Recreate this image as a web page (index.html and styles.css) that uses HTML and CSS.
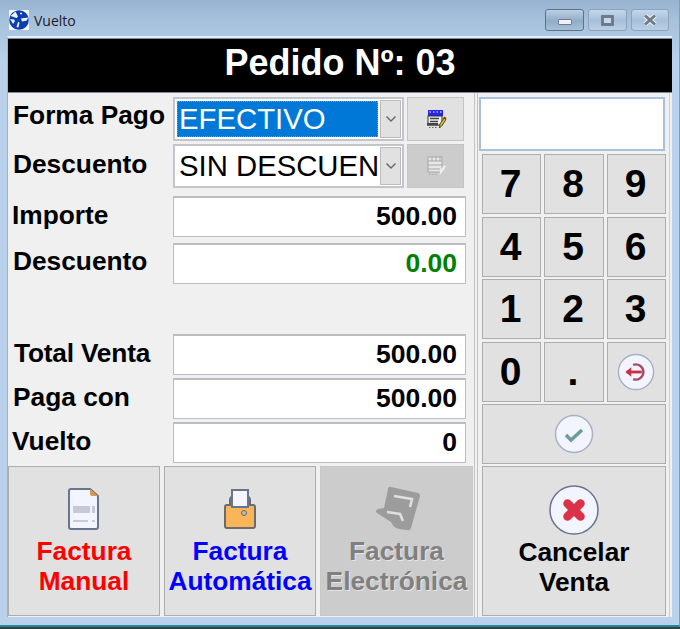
FILE: index.html
```html
<!DOCTYPE html>
<html lang="es">
<head>
<meta charset="utf-8">
<title>Vuelto</title>
<link rel="stylesheet" href="styles.css">
</head>
<body>
<div class="window">
  <header class="titlebar">
    <svg class="app-icon" viewBox="0 0 20 20"><rect width="20" height="20" fill="#f4f7fc"/><circle cx="10" cy="10" r="9.800" fill="#0b3fb0"/><path d="M6.500 1.500l2.500 5-1.500 1.500-6-2zM1 9l4 .5 1 1.500-2 3zM12 8.500l7-1-1 3-5 1zM9 12l1.500.5-1 5-2-.5z" fill="#eef2fb"/><circle cx="12" cy="3.500" r="1" fill="#eef2fb"/></svg>
    <span class="title">Vuelto</span>
    <div class="controls">
      <button class="ctl ctl-active"><span class="glyph-min"></span></button>
      <button class="ctl"><span class="glyph-max"></span></button>
      <button class="ctl"><svg width="14" height="12" viewBox="0 0 14 12"><path d="M2 1.500l10 9M12 1.500l-10 9" stroke="#eef3f8" stroke-width="5"/><path d="M2 1.500l10 9M12 1.500l-10 9" stroke="#6f7a88" stroke-width="3"/></svg></button>
    </div>
  </header>
  <main class="client">
    <h1 class="banner">Pedido Nº: 03</h1>
    <div class="body">
      <section class="left">
        <div class="row row-combo1">
          <label class="lbl">Forma Pago</label>
          <div class="combo"><span class="combo-text selected">EFECTIVO</span><span class="arrow"><svg width="12" height="8" viewBox="0 0 12 8"><path d="M1.500 1.500L6 6l4.500-4.500" fill="none" stroke="#666" stroke-width="1.400"/></svg></span></div>
          <button class="edit">
            <svg width="22" height="22" viewBox="0 0 22 22"><rect x="3" y="2" width="15" height="6" fill="#2626e6"/><path d="M4.500 4h1.500M8 4h1.500M11.500 4h1.500M15 4h1.500" stroke="#fff"/><rect x="3" y="8" width="14" height="9" fill="#eef0f6" stroke="#333" stroke-width="1"/><path d="M5 10.500h9M5 13.500h8" stroke="#444" stroke-width="1.300"/><rect x="2" y="15" width="11" height="2.500" fill="#444"/><path d="M4 19.500h1.500M7 19.500h1.500M10 19.500h1.500" stroke="#666"/><path d="M14.500 20l.5-4 4-6 2 1.500-4 6z" fill="#e6c416" stroke="#222" stroke-width=".8"/><path d="M19 8.500l2.500 1.500-1 1.500-2-1.500z" fill="#8c2020"/></svg>
          </button>
        </div>
        <div class="row row-combo2">
          <label class="lbl">Descuento</label>
          <div class="combo"><span class="combo-text">SIN DESCUEN</span><span class="arrow"><svg width="12" height="8" viewBox="0 0 12 8"><path d="M1.500 1.500L6 6l4.500-4.500" fill="none" stroke="#666" stroke-width="1.400"/></svg></span></div>
          <button class="edit edit-off">
            <svg width="22" height="22" viewBox="0 0 22 22"><rect x="3" y="2" width="14" height="15" fill="#e8e8e8" stroke="#a6a6a6"/><path d="M3 6h14M3 10h14M3 14h12M7 2v4M11 2v4M15 2v4" stroke="#a6a6a6"/><path d="M4 19.500h1.500M7 19.500h1.500M10 19.500h1.500" stroke="#aaa"/><path d="M14.500 20l.5-4 4-6 2 1.500-4 6z" fill="#eee"/></svg>
          </button>
        </div>
        <div class="row row-a">
          <label class="lbl">Importe</label>
          <output class="field">500.00</output>
        </div>
        <div class="row row-b">
          <label class="lbl">Descuento</label>
          <output class="field field-green">0.00</output>
        </div>
        <div class="row row-total">
          <label class="lbl lbl-c">Total Venta</label>
          <output class="field">500.00</output>
        </div>
        <div class="row row-paga">
          <label class="lbl">Paga con</label>
          <output class="field">500.00</output>
        </div>
        <div class="row row-vuelto">
          <label class="lbl">Vuelto</label>
          <output class="field">0</output>
        </div>
        <div class="actions">
          <button class="action red">
            <svg class="act-icon" width="36" height="46" viewBox="0 0 36 46"><path d="M5 3h19l8 7v31a2 2 0 0 1-2 2H5a2 2 0 0 1-2-2V5a2 2 0 0 1 2-2z" fill="#f2f5fd" stroke="#6a7390" stroke-width="2"/><path d="M24 3v5a2 2 0 0 0 2 2h6z" fill="#d89a50"/><path d="M7 20h17v7H7zM26 20h3v7h-3z" fill="#c6cad8"/><path d="M7 35h15M26 35h3" stroke="#c6cad8" stroke-width="2"/></svg>
            <span>Factura<br>Manual</span>
          </button>
          <button class="action blue">
            <svg class="act-icon" width="36" height="46" viewBox="0 0 36 46"><path d="M8 22v-8a4 4 0 0 1 4-4h12a4 4 0 0 1 4 4v8" fill="#f9b558" stroke="#6a6a70" stroke-width="2"/><rect x="3" y="19" width="30" height="23" rx="2" fill="#f9b558" stroke="#6a6a70" stroke-width="2"/><rect x="10" y="4" width="16" height="17" fill="#f4f6fc" stroke="#6a7390" stroke-width="2"/><circle cx="22" cy="27" r="2.500" fill="#bbb" stroke="#6a6a70"/></svg>
            <span>Factura<br>Automática</span>
          </button>
          <button class="action off">
            <svg class="act-icon" width="50" height="46" viewBox="5 7 50 46"><path d="M24 8l27 6a3 3 0 0 1 2 3l-9 32a3 3 0 0 1-4 2l-8-1c-4-1-6-3-8-7l-14-9c-2-1-1-3 1-4l6-1 4-19a2 2 0 0 1 3-2z" fill="#9c9c9c"/><path d="M27 17l18 3-2 8" fill="none" stroke="#e0e0e0" stroke-width="2.500"/><path d="M20 33l13 2 3 7" fill="none" stroke="#e0e0e0" stroke-width="2.500"/></svg>
            <span>Factura<br>Electrónica</span>
          </button>
        </div>
      </section>
      <aside class="right">
        <div class="display"></div>
        <div class="keys">
          <button class="key">7</button><button class="key">8</button><button class="key">9</button>
          <button class="key">4</button><button class="key">5</button><button class="key">6</button>
          <button class="key">1</button><button class="key">2</button><button class="key">3</button>
          <button class="key">0</button><button class="key">.</button>
          <button class="key">
            <svg width="38" height="38" viewBox="0 0 40 40"><circle cx="20" cy="20" r="18.500" fill="#f2f5fd" stroke="#a9b0c4" stroke-width="1.500"/><path d="M17 12.500a8 8 0 1 1 0 15" fill="none" stroke="#a94a68" stroke-width="2.500"/><path d="M26 20H10" stroke="#c8304a" stroke-width="3"/><path d="M15 15l-6 5 6 5z" fill="#c8304a"/></svg>
          </button>
          <button class="key key-wide">
            <svg width="40" height="40" viewBox="0 0 40 40"><circle cx="20" cy="20" r="18.500" fill="#f2f5fd" stroke="#a9b0c4" stroke-width="1.500"/><path d="M12 21l5 5 11-10" fill="none" stroke="#6d9ba0" stroke-width="3.500"/></svg>
          </button>
        </div>
        <button class="action cancel">
          <svg class="act-icon" width="50" height="50" viewBox="0 0 50 50"><circle cx="25" cy="25" r="24" fill="#f2f5fd" stroke="#6a7390" stroke-width="1.500"/><path d="M18.500 18.500l13 13M31.500 18.500l-13 13" stroke="#dc3248" stroke-width="8.500" stroke-linecap="round"/></svg>
          <span>Cancelar<br>Venta</span>
        </button>
      </aside>
    </div>
  </main>
</div>
</body>
</html>
```
FILE: styles.css
```css
* { box-sizing: border-box; }
html, body { margin: 0; height: 100%; }
body {
  width: 680px;
  height: 629px;
  overflow: hidden;
  background: #3a3f42;
  font-family: "Liberation Sans", Arial, sans-serif;
}
button { font-family: inherit; padding: 0; margin: 0; }

.window {
  width: 680px;
  height: 627px;
  padding: 0 7px 8px 7px;
  display: flex;
  flex-direction: column;
  background: linear-gradient(180deg, #96b3d0 0, #a6c1dc 20px, #b9d1ea 60px);
  border-bottom: 2px solid #1f8a9c;
  border-right: 1px solid #39b8e4;
}
.titlebar {
  height: 36px;
  flex: none;
  display: flex;
  align-items: flex-start;
  padding: 10px 3px 0 2px;
}
.app-icon { width: 20px; height: 20px; flex: none; }
.title {
  margin-left: 5px;
  font: 14px/22px "Open Sans", sans-serif;
  color: #1a1a2a;
}
.controls { margin: -1px 0 0 auto; display: flex; gap: 4px; }
.ctl {
  width: 39px;
  height: 22px;
  border: 1px solid #8ea3ba;
  border-radius: 3px;
  background: linear-gradient(180deg, #c4d7ea 0, #a6c0da 50%, #b9d0e6 100%);
  display: flex;
  align-items: center;
  justify-content: center;
}
.ctl:last-child { width: 38px; }
.ctl-active { border-color: #5f7185; background: linear-gradient(180deg, #bdd0e4 0, #90acc8 55%, #a6c0da 100%); }
.glyph-min { width: 14px; height: 6px; background: #eef1f5; border: 1px solid #778; border-radius: 1px; margin-top: 3px; }
.glyph-max { width: 13px; height: 11px; border: 3px solid #6f7a88; background: #c9d8e8; border-radius: 1px; }

.client {
  flex: 1;
  min-height: 0;
  display: flex;
  flex-direction: column;
  background: #f0f0f0;
  border-top: 2px solid #e6edf5;
  border-left: 1px solid #a9b2bc;
}
.banner {
  margin: 0;
  height: 55px;
  flex: none;
  background: #000;
  color: #fff;
  text-align: center;
  font-size: 36px;
  font-weight: 700;
  line-height: 47px;
  border-top: 1px solid #7a8a9a;
  border-bottom: 1px solid #7a8a9a;
}
.body { flex: 1; min-height: 0; display: flex; }
.left {
  width: 467px;
  flex: none;
  display: flex;
  flex-direction: column;
  border-right: 1px solid #c4c4c4;
}
.row { display: flex; align-items: flex-start; padding-left: 4px; flex: none; }
.row-combo1 { margin-top: 4px; height: 44px; }
.row-combo2 { margin-top: 3px; height: 44px; }
.row-a { margin-top: 8px; height: 41px; }
.row-b { margin-top: 6px; height: 41px; }
.row-total { margin-top: 50px; height: 41px; }
.row-paga { margin-top: 3px; height: 41px; }
.row-vuelto { margin-top: 3px; height: 41px; }

.lbl {
  width: 161px;
  flex: none;
  font-size: 26.300px;
  font-weight: 700;
  line-height: 36px;
  color: #000;
  white-space: nowrap;
  padding: 1px 0 0 1px;
}
.row-combo1 .lbl, .row-b .lbl { padding-top: 0; }
.row-combo2 .lbl { padding-top: 2px; }
.row-a .lbl, .row-vuelto .lbl { padding-left: 0; }
.row-total .lbl { letter-spacing: -.2px; }
.lbl-c { padding-left: 2px; }

.field {
  width: 293px;
  height: 100%;
  background: #fff;
  border: 1px solid #bcbcc4;
  border-top-width: 2px;
  font-size: 26.500px;
  font-weight: 700;
  text-align: right;
  line-height: 36px;
  padding: 0 8px 0 0;
  color: #000;
}
.field-green { color: #008000; }

.combo {
  width: 231px;
  height: 100%;
  background: #fff;
  border: 2px solid #c4c4cc;
  padding: 2px;
  display: flex;
  align-items: stretch;
}
.combo-text {
  flex: 1;
  min-width: 0;
  font-size: 29.300px;
  line-height: 36px;
  padding-left: 2px;
  white-space: nowrap;
  color: #000;
}
.selected {
  background: #0078d7;
  color: #fff;
  outline: 1px dotted #e08020;
  outline-offset: -1px;
}
.arrow {
  width: 21px;
  margin: -1px -1px -1px 2px;
  background: #e1e1e1;
  border: 1px solid #bcbcbc;
  display: flex;
  align-items: center;
  justify-content: center;
  flex: none;
}
.edit {
  width: 57px;
  height: 100%;
  margin-left: 3px;
  background: #e1e1e1;
  border: 1px solid #c4c4c4;
  display: flex;
  align-items: center;
  justify-content: center;
}
.edit-off { background: #cccccc; }

.actions { display: flex; gap: 4px; margin-top: 3px; flex: 1; min-height: 0; padding-bottom: 1px; }
.action {
  width: 152px;
  flex: none;
  background: #e1e1e1;
  border: 1px solid #adadad;
  display: flex;
  flex-direction: column;
  align-items: center;
  justify-content: flex-start;
  padding-top: 19px;
  font-size: 26.300px;
  font-weight: 700;
  line-height: 30px;
  text-align: center;
}
.act-icon { height: 46px; flex: none; margin-bottom: 4px; }
.red { color: #ff0000; }
.blue { color: #0000ff; }
.off { color: #808080; background: #cccccc; border-color: #c8c8c8; width: 153px; text-shadow: 1px 1px 0 #e6e6e6; }

.right {
  flex: 1;
  min-width: 0;
  margin: 0 2px 0 2px;
  padding: 4px 0 1px 4px;
  border-left: 1px solid #c4c4c4;
  border-right: 1px solid #d0d0d0;
  display: flex;
  flex-direction: column;
}
.display {
  width: 186px;
  height: 54px;
  flex: none;
  margin: 0 0 3px -3px;
  background: #fff;
  border: 2px solid #a8c0dc;
}
.keys {
  display: grid;
  grid-template-columns: 59px 60px 59px;
  grid-auto-rows: 60px;
  gap: 2.600px 3px;
  flex: none;
}
.key {
  background: #e1e1e1;
  border: 1px solid #adadad;
  font-size: 39px;
  font-weight: 700;
  color: #000;
  display: flex;
  align-items: center;
  justify-content: center;
  padding-right: 2px;
}
.key-wide { grid-column: 1 / -1; padding-right: 0; }
.cancel {
  width: 184px;
  flex: 1;
  margin-top: 1.600px;
  padding-top: 18px;
  color: #000;
}
.cancel .act-icon { height: 50px; margin-bottom: 2px; }
```
